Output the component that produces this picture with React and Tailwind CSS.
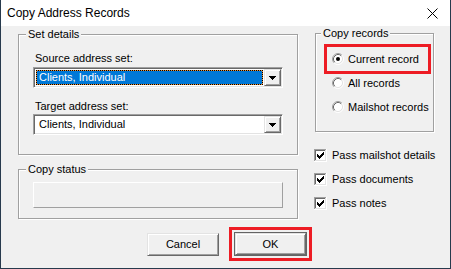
import React from "react";

const sunken =
  "border border-t-[#a0a0a0] border-l-[#a0a0a0] border-b-white border-r-white shadow-[inset_1px_1px_0_#696969,inset_-1px_-1px_0_#e3e3e3]";
const raised =
  "border border-t-[#e3e3e3] border-l-[#e3e3e3] border-b-[#696969] border-r-[#696969] shadow-[inset_1px_1px_0_#ffffff,inset_-1px_-1px_0_#a0a0a0]";
const etched =
  "relative border border-[#a0a0a0] shadow-[inset_1px_1px_0_#ffffff,1px_1px_0_#ffffff]";

function Arrow() {
  return (
    <svg width="7" height="4" viewBox="0 0 7 4" shapeRendering="crispEdges">
      <rect x="0" y="0" width="7" height="1" fill="#000" />
      <rect x="1" y="1" width="5" height="1" fill="#000" />
      <rect x="2" y="2" width="3" height="1" fill="#000" />
      <rect x="3" y="3" width="1" height="1" fill="#000" />
    </svg>
  );
}

function Combo({ selected }) {
  return (
    <div className={`h-[21px] flex bg-white p-[1px] ${sunken}`}>
      {selected ? (
        <div className="flex-1 mx-[1px] my-[1px] bg-[#f09030] flex">
          <div className="flex-1 border border-dotted border-black bg-[#0078d7] bg-clip-padding flex items-center pl-[2px] text-white leading-[13px] whitespace-nowrap">
            Clients, Individual
          </div>
        </div>
      ) : (
        <div className="flex-1 mx-[1px] my-[1px] flex items-center pl-[3px] leading-[13px] whitespace-nowrap">
          Clients, Individual
        </div>
      )}
      <div className={`w-[17px] bg-[#f0f0f0] flex items-center justify-center ${raised}`}>
        <Arrow />
      </div>
    </div>
  );
}

function Radio({ checked }) {
  return (
    <svg width="12" height="12" viewBox="0 0 12 12" className="shrink-0">
      <circle cx="6" cy="6" r="4.5" fill="#fff" />
      <path d="M2.11 9.89 A5.5 5.5 0 0 1 9.89 2.11" stroke="#a0a0a0" fill="none" strokeWidth="1" />
      <path d="M9.89 2.11 A5.5 5.5 0 0 1 2.11 9.89" stroke="#ffffff" fill="none" strokeWidth="1" />
      <path d="M2.82 9.18 A4.5 4.5 0 0 1 9.18 2.82" stroke="#696969" fill="none" strokeWidth="1" />
      <path d="M9.18 2.82 A4.5 4.5 0 0 1 2.82 9.18" stroke="#e3e3e3" fill="none" strokeWidth="1" />
      {checked && <circle cx="6" cy="6" r="2" fill="#000" />}
    </svg>
  );
}

function Check() {
  const cols = [
    [3, 5],
    [4, 6],
    [5, 7],
    [6, 6],
    [7, 5],
    [8, 4],
    [9, 3],
  ];
  return (
    <svg width="13" height="13" viewBox="0 0 13 13" shapeRendering="crispEdges" className="shrink-0">
      <rect x="0" y="0" width="13" height="13" fill="#fff" />
      <rect x="0" y="0" width="12" height="1" fill="#a0a0a0" />
      <rect x="0" y="0" width="1" height="12" fill="#a0a0a0" />
      <rect x="1" y="1" width="10" height="1" fill="#696969" />
      <rect x="1" y="1" width="1" height="10" fill="#696969" />
      <rect x="12" y="0" width="1" height="13" fill="#fff" />
      <rect x="0" y="12" width="13" height="1" fill="#fff" />
      <rect x="11" y="1" width="1" height="11" fill="#e3e3e3" />
      <rect x="1" y="11" width="11" height="1" fill="#e3e3e3" />
      {cols.map(([x, y]) => (
        <rect key={x} x={x} y={y} width="1" height="3" fill="#000" />
      ))}
    </svg>
  );
}

function Legend({ children, left }) {
  return (
    <span
      className={`absolute -top-[7px] ${left} px-[2px] bg-[#f0f0f0] leading-[13px] whitespace-nowrap`}
    >
      {children}
    </span>
  );
}

function CheckRow({ label, className = "" }) {
  return (
    <div className={`flex items-center h-[13px] gap-[5px] leading-[13px] whitespace-nowrap ${className}`}>
      <Check />
      <span>{label}</span>
    </div>
  );
}

export default function App() {
  return (
    <div className="w-[451px] h-[269px] flex flex-col border-x border-b border-[#273a4d] font-['Liberation_Sans',sans-serif] text-[11px] text-black overflow-hidden">
      <div className="h-[26px] shrink-0 bg-white flex items-center justify-between pl-[6px] pr-[12px]">
        <span className="text-[12px] leading-[16px]">Copy Address Records</span>
        <svg width="11" height="11" viewBox="0 0 11 11">
          <path d="M0.5 0.5 L10.5 10.5 M10.5 0.5 L0.5 10.5" stroke="#000" strokeWidth="1" />
        </svg>
      </div>
      <div className="flex-1 bg-[#f0f0f0] flex flex-col pt-[7px]">
        <div className="flex items-start pl-[17px]">
          <div className="w-[280px] mt-[1px] flex flex-col">
            <div className={`h-[121px] px-[14px] pt-[17px] ${etched}`}>
              <Legend left="left-[7px]">Set details</Legend>
              <div className="pl-[2px] leading-[13px]">Source address set:</div>
              <div className="mt-[2px]">
                <Combo selected />
              </div>
              <div className="pl-[2px] mt-[12px] leading-[13px]">Target address set:</div>
              <div className="mt-[1px]">
                <Combo />
              </div>
            </div>
            <div className={`mt-[14px] h-[50px] px-[14px] pt-[12px] ${etched}`}>
              <Legend left="left-[7px]">Copy status</Legend>
              <div className="h-[26px] border border-t-white border-l-white border-b-[#a0a0a0] border-r-[#a0a0a0]" />
            </div>
          </div>
          <div className="ml-[16px] w-[120px] flex flex-col">
            <div className={`ml-[1px] w-[119px] h-[99px] pt-[10px] ${etched}`}>
              <Legend left="left-[5px]">Copy records</Legend>
              <div className="ml-[8px] w-[107px] h-[30px] border-[3px] border-[#ed1c24] flex items-center pl-[5px] gap-[4px] leading-[13px] whitespace-nowrap">
                <Radio checked />
                <span>Current record</span>
              </div>
              <div className="mt-[2px] h-[14px] flex items-center pl-[16px] gap-[4px] leading-[13px] whitespace-nowrap">
                <Radio />
                <span>All records</span>
              </div>
              <div className="mt-[10px] h-[14px] flex items-center pl-[16px] gap-[4px] leading-[13px] whitespace-nowrap">
                <Radio />
                <span>Mailshot records</span>
              </div>
            </div>
            <CheckRow label="Pass mailshot details" className="mt-[17px]" />
            <CheckRow label="Pass documents" className="mt-[11px]" />
            <CheckRow label="Pass notes" className="mt-[11px]" />
          </div>
        </div>
        <div className="mt-[8px] flex items-center pl-[146px]">
          <button className={`w-[72px] h-[23px] bg-[#f0f0f0] flex items-center justify-center leading-[13px] ${raised}`}>
            Cancel
          </button>
          <div className="ml-[10px] border-[3px] border-[#ed1c24] p-[2px]">
            <div className="border border-[#646464]">
              <button className={`w-[71px] h-[22px] bg-[#f0f0f0] flex items-center justify-center leading-[13px] ${raised}`}>
                OK
              </button>
            </div>
          </div>
        </div>
      </div>
    </div>
  );
}
